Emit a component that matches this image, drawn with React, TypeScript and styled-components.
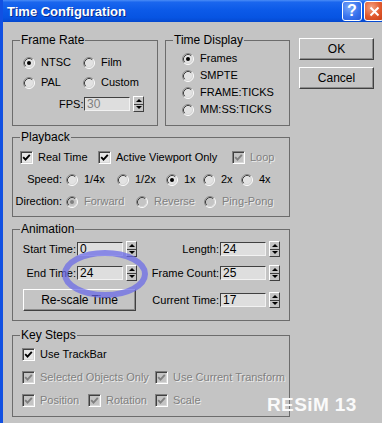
import React from "react";
import styled, { createGlobalStyle } from "styled-components";

const FACE = `"Liberation Sans", Arial, sans-serif`;
const BG = "#c4c4c4";

const GlobalStyle = createGlobalStyle`
  html, body { margin: 0; padding: 0; background: ${BG}; }
  body { font-family: ${FACE}; font-size: 11px; line-height: 13px; color: #000; }
  * { box-sizing: border-box; }
`;

const Window = styled.div`
  position: relative;
  width: 382px;
  height: 423px;
  overflow: hidden;
  background: ${BG};
  border-left: 3px solid #1150e2;
`;

const TitleBar = styled.div`
  height: 22px;
  display: flex;
  align-items: center;
  padding-left: 4px;
  background: linear-gradient(180deg, #4a8cf6 0%, #1a66ee 10%, #0c5ae8 45%, #0754e2 80%, #0448cf 100%);
`;

const TitleText = styled.span`
  flex: 1;
  font: bold 13px "Liberation Sans", Arial, sans-serif;
  color: #fff;
  text-shadow: 1px 1px 0 #0a2c8c;
`;

const CapButton = styled.span<{ $close?: boolean }>`
  width: 20px;
  height: 20px;
  margin-left: 2px;
  margin-right: ${(p) => (p.$close ? "-2px" : "0")};
  border: 1px solid #fff;
  border-radius: 3px;
  background: ${(p) =>
    p.$close
      ? "radial-gradient(circle at 35% 30%, #f4a080, #e0582c 55%, #c84018 100%)"
      : "radial-gradient(circle at 35% 30%, #7aa8fa, #3a74ee 55%, #2458d8 100%)"};
  display: flex;
  align-items: center;
  justify-content: center;
  color: #fff;
  font: bold 16px "Liberation Sans", Arial, sans-serif;
`;

const Body = styled.div`
  display: flex;
  gap: 9px;
  padding: 12px 0 0 9px;
`;

const MainCol = styled.div`
  width: 278px;
  display: flex;
  flex-direction: column;
`;

const TopRow = styled.div`
  display: flex;
  gap: 7px;
`;

const SideCol = styled.div`
  width: 75px;
  display: flex;
  flex-direction: column;
  gap: 7px;
  padding-top: 4px;
`;

const PushButton = styled.button<{ $w?: number }>`
  width: ${(p) => p.$w ?? 75}px;
  height: 22px;
  padding: 0;
  font: inherit;
  font-size: 12px;
  color: #000;
  background: ${BG};
  border: 1px solid;
  border-color: #fff #404040 #404040 #fff;
  box-shadow: inset -1px -1px 0 #8c8c8c;
`;

const Group = styled.fieldset<{ $mt?: number; $w?: number }>`
  margin: ${(p) => p.$mt ?? 0}px 0 0;
  padding: 0;
  width: ${(p) => (p.$w ? `${p.$w}px` : "auto")};
  min-width: 0;
  border: 1px solid #6c6c6c;
`;

const Caption = styled.legend`
  margin-left: 7px;
  padding: 0 1px;
  line-height: 12px;
  font-size: 12px;
`;

const GroupBody = styled.div<{ $pad: string; $gap: number }>`
  display: flex;
  flex-direction: column;
  gap: ${(p) => p.$gap}px;
  padding: ${(p) => p.$pad};
`;

const OptionRow = styled.div<{ $cols: string; $indent?: number }>`
  display: grid;
  grid-template-columns: ${(p) => p.$cols};
  align-items: center;
  min-height: 13px;
  padding-left: ${(p) => p.$indent ?? 0}px;
`;

const RowLabel = styled.span`
  text-align: right;
  padding-right: 4px;
  white-space: nowrap;
`;

const Choice = styled.span`
  display: inline-flex;
  align-items: center;
  gap: 6px;
  height: 13px;
  white-space: nowrap;
`;

const CheckChoice = styled(Choice)`
  gap: 5px;
`;

const Text = styled.span<{ $off?: boolean }>`
  color: ${(p) => (p.$off ? "#808080" : "#000")};
  text-shadow: ${(p) => (p.$off ? "1px 1px 0 #ececec" : "none")};
`;

const TickBox = styled.span<{ $off?: boolean }>`
  width: 13px;
  height: 13px;
  flex: none;
  border: 1px solid;
  border-color: #808080 #fff #fff #808080;
  box-shadow: inset 1px 1px 0 #404040, inset -1px -1px 0 #d8d8d8;
  background: ${(p) => (p.$off ? BG : "#e6e6e6")};
  display: flex;
  align-items: center;
  justify-content: center;
`;

const Entry = styled.input<{ $off?: boolean }>`
  width: 46px;
  height: 14px;
  margin: 0;
  padding: 0 0 0 2px;
  font: inherit;
  font-size: 12px;
  line-height: 12px;
  border: 1px solid;
  border-color: #404040 #f2f2f2 #f2f2f2 #404040;
  background: #dedede;
  color: ${(p) => (p.$off ? "#808080" : "#000")};
  outline: none;
`;

const NumBox = styled.span`
  display: inline-flex;
  align-items: center;
  gap: 3px;
`;

const Spin = styled.span`
  width: 11px;
  height: 16px;
  flex: none;
  display: flex;
  flex-direction: column;
  border: 1px solid;
  border-color: #fff #404040 #404040 #fff;
`;

const SpinHalf = styled.span`
  flex: 1;
  display: flex;
  align-items: center;
  justify-content: center;
  & + & {
    border-top: 1px solid #404040;
  }
`;

const Arrow = styled.span<{ $down?: boolean }>`
  width: 0;
  height: 0;
  border-left: 3px solid transparent;
  border-right: 3px solid transparent;
  ${(p) => (p.$down ? "border-top: 3px solid #000;" : "border-bottom: 3px solid #000;")}
`;

const AnimGrid = styled.div`
  display: grid;
  grid-template-columns: 64px 60px 83px 60px;
  grid-template-rows: 16px 16px 22px;
  row-gap: 8px;
  align-items: center;
  padding: 6px 0 9px 0;
`;

const FieldLabel = styled.span`
  text-align: right;
  padding-right: 1px;
  white-space: nowrap;
`;

const RescaleButton = styled(PushButton)`
  grid-column: 1 / 3;
  margin-left: 10px;
  height: 22px;
`;

const Halo = styled.svg`
  position: absolute;
  left: 56px;
  top: 248px;
  pointer-events: none;
`;

const Stamp = styled.div`
  position: absolute;
  left: 264px;
  top: 395px;
  font: bold 19px/19px "Liberation Sans", Arial, sans-serif;
  letter-spacing: 0.4px;
  color: #fafafa;
`;

function RadioDot({ on, off }: { on?: boolean; off?: boolean }) {
  return (
    <svg width="12" height="12" viewBox="0 0 12 12" style={{ flex: "none" }}>
      <circle cx="6" cy="6" r="5" fill={off ? BG : "#e2e2e2"} />
      <path d="M2.11 9.89A5.5 5.5 0 0 1 9.89 2.11" stroke="#8a8a8a" fill="none" />
      <path d="M9.89 2.11A5.5 5.5 0 0 1 2.11 9.89" stroke="#ffffff" fill="none" />
      <path d="M2.82 9.18A4.5 4.5 0 0 1 9.18 2.82" stroke="#404040" fill="none" />
      <path d="M9.18 2.82A4.5 4.5 0 0 1 2.82 9.18" stroke="#d6d6d6" fill="none" />
      {on && <circle cx="6" cy="6" r="2" fill={off ? "#808080" : "#000"} />}
    </svg>
  );
}

function Radio({ label, on, off }: { label: string; on?: boolean; off?: boolean }) {
  return (
    <Choice>
      <RadioDot on={on} off={off} />
      <Text $off={off}>{label}</Text>
    </Choice>
  );
}

function Check({ label, off }: { label: string; off?: boolean }) {
  return (
    <CheckChoice>
      <TickBox $off={off}>
        <svg width="9" height="9" viewBox="0 0 9 9">
          <path
            d="M1.2 4.2 L3.5 6.6 L7.8 1.8"
            stroke={off ? "#808080" : "#000"}
            strokeWidth="1.9"
            fill="none"
          />
        </svg>
      </TickBox>
      <Text $off={off}>{label}</Text>
    </CheckChoice>
  );
}

function NumField({ value, off }: { value: string; off?: boolean }) {
  return (
    <NumBox>
      <Entry readOnly value={value} $off={off} />
      <Spin>
        <SpinHalf>
          <Arrow />
        </SpinHalf>
        <SpinHalf>
          <Arrow $down />
        </SpinHalf>
      </Spin>
    </NumBox>
  );
}

export default function App() {
  return (
    <>
      <GlobalStyle />
      <Window>
        <TitleBar>
          <TitleText>Time Configuration</TitleText>
          <CapButton>?</CapButton>
          <CapButton $close>
            <svg width="11" height="11" viewBox="0 0 11 11">
              <path d="M1.5 1.5 L9.5 9.5 M9.5 1.5 L1.5 9.5" stroke="#fff" strokeWidth="2" />
            </svg>
          </CapButton>
        </TitleBar>

        <Body>
          <MainCol>
            <TopRow>
              <Group $w={146}>
                <Caption>Frame Rate</Caption>
                <GroupBody $pad="10px 0 13px 10px" $gap={7}>
                  <OptionRow $cols="60px auto">
                    <Radio label="NTSC" on />
                    <Radio label="Film" />
                  </OptionRow>
                  <OptionRow $cols="60px auto">
                    <Radio label="PAL" />
                    <Radio label="Custom" />
                  </OptionRow>
                  <OptionRow $cols="25px auto" $indent={36}>
                    <FieldLabel>FPS:</FieldLabel>
                    <NumField value="30" off />
                  </OptionRow>
                </GroupBody>
              </Group>

              <Group $w={125}>
                <Caption>Time Display</Caption>
                <GroupBody $pad="6px 0 0 16px" $gap={4}>
                  <Radio label="Frames" on />
                  <Radio label="SMPTE" />
                  <Radio label="FRAME:TICKS" />
                  <Radio label="MM:SS:TICKS" />
                </GroupBody>
              </Group>
            </TopRow>

            <Group $mt={5}>
              <Caption>Playback</Caption>
              <GroupBody $pad="8px 0 8px 0" $gap={9}>
                <OptionRow $cols="78px 134px auto" $indent={7}>
                  <Check label="Real Time" />
                  <Check label="Active Viewport Only" />
                  <Check label="Loop" off />
                </OptionRow>
                <OptionRow $cols="53px 51px 49px 37px 38px auto">
                  <RowLabel>Speed:</RowLabel>
                  <Radio label="1/4x" />
                  <Radio label="1/2x" />
                  <Radio label="1x" on />
                  <Radio label="2x" />
                  <Radio label="4x" />
                </OptionRow>
                <OptionRow $cols="53px 70px 68px auto">
                  <RowLabel>Direction:</RowLabel>
                  <Radio label="Forward" on off />
                  <Radio label="Reverse" off />
                  <Radio label="Ping-Pong" off />
                </OptionRow>
              </GroupBody>
            </Group>

            <Group $mt={6}>
              <Caption>Animation</Caption>
              <AnimGrid>
                <FieldLabel>Start Time:</FieldLabel>
                <NumField value="0" />
                <FieldLabel>Length:</FieldLabel>
                <NumField value="24" />
                <FieldLabel>End Time:</FieldLabel>
                <NumField value="24" />
                <FieldLabel>Frame Count:</FieldLabel>
                <NumField value="25" />
                <RescaleButton $w={113}>Re-scale Time</RescaleButton>
                <FieldLabel>Current Time:</FieldLabel>
                <NumField value="17" />
              </AnimGrid>
            </Group>

            <Group $mt={8}>
              <Caption>Key Steps</Caption>
              <GroupBody $pad="7px 0 9px 0" $gap={10}>
                <OptionRow $cols="auto" $indent={9}>
                  <Check label="Use TrackBar" />
                </OptionRow>
                <OptionRow $cols="133px auto" $indent={9}>
                  <Check label="Selected Objects Only" off />
                  <Check label="Use Current Transform" off />
                </OptionRow>
                <OptionRow $cols="66px 67px auto" $indent={9}>
                  <Check label="Position" off />
                  <Check label="Rotation" off />
                  <Check label="Scale" off />
                </OptionRow>
              </GroupBody>
            </Group>
          </MainCol>

          <SideCol>
            <PushButton>OK</PushButton>
            <PushButton>Cancel</PushButton>
          </SideCol>
        </Body>

        <Halo width="92" height="54" viewBox="0 0 92 54">
          <ellipse cx="46" cy="26" rx="40" ry="21" fill="none" stroke="rgba(104,104,232,0.72)" strokeWidth="6" />
        </Halo>
        <Stamp>RESiM 13</Stamp>
      </Window>
    </>
  );
}
